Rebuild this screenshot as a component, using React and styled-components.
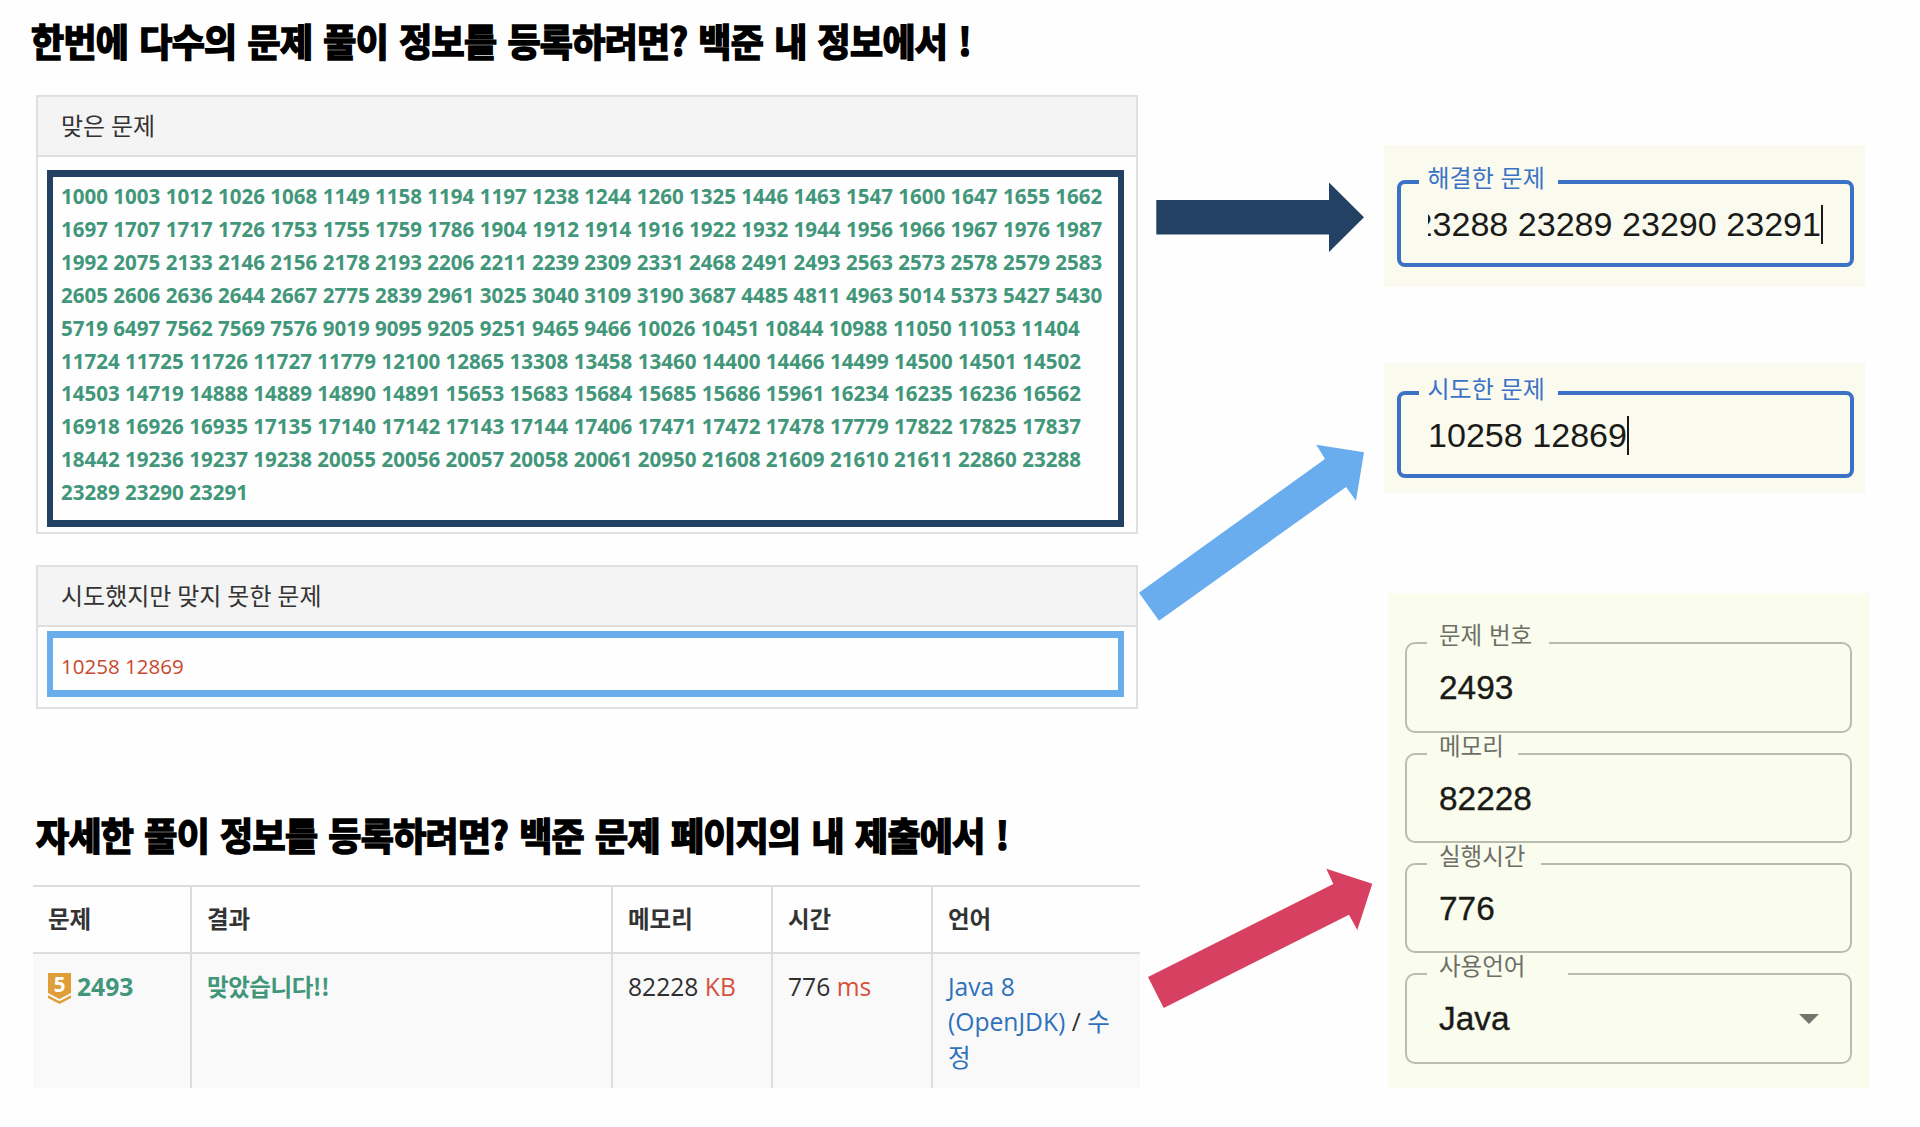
import React from "react";
import styled, { createGlobalStyle } from "styled-components";

const GlobalStyle = createGlobalStyle`
  * { box-sizing: border-box; }
  html, body { margin: 0; padding: 0; background: #fefefe; }
  body { overflow: hidden; }
`;

const webFont = `"Open Sans", "Noto Sans CJK KR", sans-serif`;
const formFont = `"Liberation Sans", "Noto Sans CJK KR", sans-serif`;
const koreanFont = `"Noto Sans CJK KR", sans-serif`;

const Page = styled.div`
  display: grid;
  grid-template-columns: 1140px 244px 482px;
  width: 1920px;
  height: 1127px;
  overflow: hidden;
`;

const Sources = styled.div`
  display: flex;
  flex-direction: column;
  align-items: flex-start;
`;

const Title = styled.h1`
  margin: ${(p) => p.$margin};
  height: 50px;
  line-height: 50px;
  font-family: ${koreanFont};
  font-size: 36px;
  font-weight: 700;
  letter-spacing: ${(p) => p.$tracking}px;
  word-spacing: 3.6px;
  white-space: nowrap;
  color: #000;
  -webkit-text-stroke: 1.6px #000;
  transform: scaleY(1.05);
`;

const Panel = styled.section`
  width: 1102px;
  height: ${(p) => p.$height}px;
  margin: ${(p) => p.$margin};
  border: 2px solid #e0e0e0;
`;

const PanelHeader = styled.header`
  height: 60px;
  padding-left: 23px;
  border-bottom: 2px solid #dfdfdf;
  background: #f4f4f4;
  font-family: ${koreanFont};
  font-size: 24px;
  line-height: 56px;
  word-spacing: 0.5px;
  color: #333;
`;

const Highlight = styled.div`
  width: 1077px;
  height: ${(p) => p.$height}px;
  margin: ${(p) => p.$gap}px 0 0 9px;
  padding: ${(p) => p.$padTop}px 8px 0;
  border: solid ${(p) => p.$color};
  border-width: 7px 6.5px;
`;

const ProblemList = styled.div`
  font-family: ${webFont};
  font-size: 20.55px;
  line-height: 32.9px;
  font-weight: ${(p) => (p.$solved ? 700 : 400)};
  color: ${(p) => (p.$solved ? "#42977a" : "#c9472f")};
`;

const Table = styled.div`
  display: grid;
  grid-template-columns: 159px 421px 160px 160px 207px;
  grid-template-rows: 67px 134px;
  width: 1107px;
  margin: 27px 0 0 33px;
  border-top: 2px solid #dcdcdc;
`;

const HeadCell = styled.div`
  padding-left: 15px;
  border-right: ${(p) => (p.$last ? "0" : "2px solid #dcdcdc")};
  border-bottom: 2px solid #dcdcdc;
  font-family: ${koreanFont};
  font-size: 23.5px;
  font-weight: 700;
  line-height: 63px;
  color: #333;
`;

const Cell = styled.div`
  padding: 15px 0 0 15px;
  border-right: ${(p) => (p.$last ? "0" : "2px solid #dcdcdc")};
  background: #f9f9f9;
  font-family: ${webFont};
  font-size: 24.65px;
  line-height: 35.3px;
  color: #2f2f2f;
  white-space: nowrap;
`;

const ProblemRef = styled.div`
  display: flex;
  gap: 6px;
  font-weight: 700;
  color: #42977a;
`;

const BadgeIcon = styled.svg`
  width: 23px;
  height: 31px;
  margin-top: 4px;
  overflow: visible;
`;

const Verdict = styled.span`
  font-family: ${koreanFont};
  font-size: 23.5px;
  font-weight: 700;
  letter-spacing: -0.45px;
  color: #42977a;
`;

const Unit = styled.span`
  color: #d6523f;
`;

const Link = styled.span`
  color: #2f72b9;
`;

const Arrows = styled.div`
  display: flex;
  flex-direction: column;
  align-items: flex-start;
`;

const ArrowShape = styled.svg`
  flex: none;
  display: block;
  margin: ${(p) => p.$margin};
`;

const Targets = styled.div`
  display: flex;
  flex-direction: column;
`;

const Card = styled.section`
  display: flex;
  flex-direction: column;
  gap: ${(p) => p.$gap || 0}px;
  flex: none;
  width: 481px;
  height: ${(p) => p.$height}px;
  margin: ${(p) => p.$margin};
  padding: ${(p) => p.$padding};
  background: ${(p) => p.$bg};
`;

const Fieldset = styled.fieldset`
  display: flex;
  align-items: center;
  flex: none;
  min-width: 0;
  width: 100%;
  height: ${(p) => p.$height}px;
  margin: 0;
  padding: ${(p) => (p.$focused ? "19px 27px 0 17px" : "23px 31px 0 20px")};
  border: ${(p) => (p.$focused ? "4px solid #3b72c6" : "2px solid #b9bcaf")};
  border-radius: ${(p) => (p.$focused ? 8 : 10)}px;
`;

const Legend = styled.legend`
  width: ${(p) => p.$width}px;
  height: 2px;
  padding: 0;
  margin-left: ${(p) => (p.$focused ? 0.5 : 0)}px;
`;

const Label = styled.span`
  display: block;
  height: 30px;
  padding-left: ${(p) => (p.$focused ? 9 : 12)}px;
  line-height: 30px;
  font-family: ${koreanFont};
  font-size: ${(p) => (p.$focused ? 24 : 23.5)}px;
  word-spacing: 1.5px;
  white-space: nowrap;
  color: ${(p) => (p.$focused ? "#3b72c6" : "#6d6f67")};
  transform: translateY(${(p) => (p.$focused ? -19 : -23)}px);
`;

const Value = styled.div`
  display: flex;
  flex: 1;
  align-items: center;
  justify-content: ${(p) => (p.$overflowing ? "flex-end" : "flex-start")};
  min-width: 0;
  height: 42px;
  margin-left: ${(p) => (p.$focused ? 10 : 12)}px;
  overflow: hidden;
  line-height: 42px;
  font-family: ${formFont};
  font-size: ${(p) => (p.$focused ? 34.1 : 33.4)}px;
  white-space: nowrap;
  color: #1a1b18;
  -webkit-text-stroke: ${(p) => (p.$focused ? 0 : 0.35)}px #1a1b18;
`;

const Caret = styled.i`
  flex: none;
  width: 2px;
  height: 39px;
  background: #1a1b18;
`;

const solvedProblems =
  "1000 1003 1012 1026 1068 1149 1158 1194 1197 1238 1244 1260 1325 1446 1463 1547 1600 1647 1655 1662 " +
  "1697 1707 1717 1726 1753 1755 1759 1786 1904 1912 1914 1916 1922 1932 1944 1956 1966 1967 1976 1987 " +
  "1992 2075 2133 2146 2156 2178 2193 2206 2211 2239 2309 2331 2468 2491 2493 2563 2573 2578 2579 2583 " +
  "2605 2606 2636 2644 2667 2775 2839 2961 3025 3040 3109 3190 3687 4485 4811 4963 5014 5373 5427 5430 " +
  "5719 6497 7562 7569 7576 9019 9095 9205 9251 9465 9466 10026 10451 10844 10988 11050 11053 11404 " +
  "11724 11725 11726 11727 11779 12100 12865 13308 13458 13460 14400 14466 14499 14500 14501 14502 " +
  "14503 14719 14888 14889 14890 14891 15653 15683 15684 15685 15686 15961 16234 16235 16236 16562 " +
  "16918 16926 16935 17135 17140 17142 17143 17144 17406 17471 17472 17478 17779 17822 17825 17837 " +
  "18442 19236 19237 19238 20055 20056 20057 20058 20061 20950 21608 21609 21610 21611 22860 23288 " +
  "23289 23290 23291";

const details = [
  { label: "문제 번호", value: "2493", notch: 122, height: 91 },
  { label: "메모리", value: "82228", notch: 91, height: 90 },
  { label: "실행시간", value: "776", notch: 114, height: 90 },
  { label: "사용언어", value: "Java", notch: 141, height: 91, select: true },
];

function Field({ label, value, notch, height, focused, overflowing, select }) {
  return (
    <Fieldset $height={height} $focused={focused}>
      <Legend $width={notch} $focused={focused}>
        <Label $focused={focused}>{label}</Label>
      </Legend>
      <Value $focused={focused} $overflowing={overflowing}>
        <span>{value}</span>
        {focused && <Caret />}
      </Value>
      {select && (
        <svg width="20" height="10" viewBox="0 0 20 10">
          <path d="M0 0H20L10 10Z" fill="#74766d" />
        </svg>
      )}
    </Fieldset>
  );
}

function Arrow({ width, height, points, color, margin }) {
  return (
    <ArrowShape $margin={margin} width={width} height={height} viewBox={`0 0 ${width} ${height}`}>
      <polygon points={points} fill={color} />
    </ArrowShape>
  );
}

function TierBadge() {
  return (
    <BadgeIcon viewBox="0 0 23 31">
      <path d="M0 0H23V20L11.5 26L0 20Z" fill="#e09e38" />
      <path d="M0 22.3L11.5 28.3L23 22.3V25L11.5 31L0 25Z" fill="#e09e38" />
      <text
        x="11.5"
        y="19"
        textAnchor="middle"
        fontFamily="Open Sans, sans-serif"
        fontSize="20.5"
        fontWeight="700"
        fill="#fff"
      >
        5
      </text>
    </BadgeIcon>
  );
}

export default function App() {
  return (
    <>
      <GlobalStyle />
      <Page>
        <Sources>
          <Title $margin="14px 0 0 31px" $tracking={-0.72}>
            한번에 다수의 문제 풀이 정보를 등록하려면? 백준 내 정보에서 !
          </Title>
          <Panel $height={439} $margin="31px 0 0 36px">
            <PanelHeader>맞은 문제</PanelHeader>
            <Highlight $height={357} $gap={13} $padTop={3} $color="#234263">
              <ProblemList $solved>{solvedProblems}</ProblemList>
            </Highlight>
          </Panel>
          <Panel $height={144} $margin="31px 0 0 36px">
            <PanelHeader>시도했지만 맞지 못한 문제</PanelHeader>
            <Highlight $height={66} $gap={4} $padTop={12} $color="#6aaded">
              <ProblemList>10258 12869</ProblemList>
            </Highlight>
          </Panel>
          <Title $margin="99px 0 0 36px" $tracking={-0.72}>
            자세한 풀이 정보를 등록하려면? 백준 문제 페이지의 내 제출에서 !
          </Title>
          <Table>
            <HeadCell>문제</HeadCell>
            <HeadCell>결과</HeadCell>
            <HeadCell>메모리</HeadCell>
            <HeadCell>시간</HeadCell>
            <HeadCell $last>언어</HeadCell>
            <Cell>
              <ProblemRef>
                <TierBadge />
                2493
              </ProblemRef>
            </Cell>
            <Cell>
              <Verdict>맞았습니다!!</Verdict>
            </Cell>
            <Cell>
              82228 <Unit>KB</Unit>
            </Cell>
            <Cell>
              776 <Unit>ms</Unit>
            </Cell>
            <Cell $last>
              <Link>
                Java 8<br />
                (OpenJDK)
              </Link>{" "}
              /{" "}
              <Link>
                수<br />정
              </Link>
            </Cell>
          </Table>
        </Sources>

        <Arrows>
          <Arrow
            margin="182px 0 0 16px"
            width={208}
            height={71}
            points="0.3,18 173,18 173,0.5 208,35.3 173,70 173,52.4 0.3,52.4"
            color="#234263"
          />
          <Arrow
            margin="191px 0 0 -2px"
            width={227}
            height={178}
            points="1,148.7 187,15 178.3,0.7 226,8.3 218,56.7 208,43 21,176.7"
            color="#69adef"
          />
          <Arrow
            margin="246px 0 0 8px"
            width={225}
            height={141}
            points="0,109 185.3,16 178.3,0.7 224.3,15.7 209.3,62 201,46.7 15.7,140"
            color="#d84062"
          />
        </Arrows>

        <Targets>
          <Card $height={142} $margin="145px 0 0 0" $padding="35px 11px 0 13px" $bg="#fafaee">
            <Field
              label="해결한 문제"
              value="23288 23289 23290 23291"
              notch={139}
              height={87}
              focused
              overflowing
            />
          </Card>
          <Card $height={130} $margin="76px 0 0 0" $padding="28px 11px 0 13px" $bg="#fafaee">
            <Field label="시도한 문제" value="10258 12869" notch={139} height={87} focused />
          </Card>
          <Card
            $height={495}
            $margin="100px 0 0 4px"
            $padding="49px 17px 0 17px"
            $gap={20}
            $bg="#fafced"
          >
            {details.map((d) => (
              <Field key={d.label} {...d} />
            ))}
          </Card>
        </Targets>
      </Page>
    </>
  );
}
